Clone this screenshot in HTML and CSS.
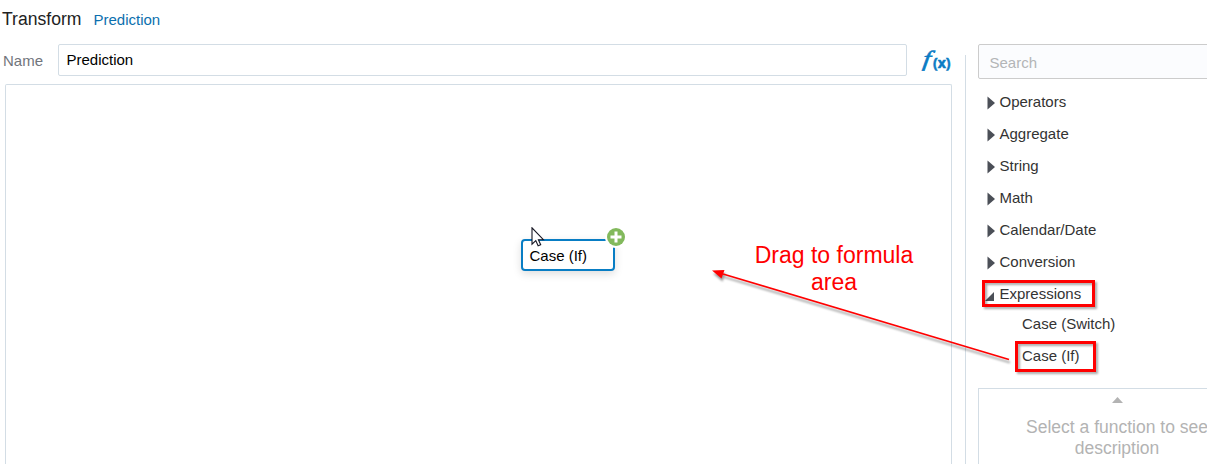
FILE: index.html
```html
<!DOCTYPE html>
<html lang="en">
<head>
<meta charset="utf-8">
<title>Transform Prediction</title>
<link rel="stylesheet" href="styles.css">
</head>
<body>
<div class="dialog">
  <header class="header"><h1 class="title">Transform</h1><span class="subtitle">Prediction</span></header>
  <div class="content">
    <main class="editor">
      <div class="name-row">
        <label class="name-label">Name</label>
        <div class="name-input">Prediction</div>
        <div class="fx"><span class="fx-f">f</span><span class="fx-x">(x)</span></div>
      </div>
      <div class="canvas"></div>
    </main>
    <aside class="sidebar">
      <div class="search">Search</div>
      <ul class="tree">
        <li class="group"><svg class="caret" viewBox="0 0 8 14"><path d="M0.5 0.5 8 7 0.5 13.5z"/></svg>Operators</li>
        <li class="group"><svg class="caret" viewBox="0 0 8 14"><path d="M0.5 0.5 8 7 0.5 13.5z"/></svg>Aggregate</li>
        <li class="group"><svg class="caret" viewBox="0 0 8 14"><path d="M0.5 0.5 8 7 0.5 13.5z"/></svg>String</li>
        <li class="group"><svg class="caret" viewBox="0 0 8 14"><path d="M0.5 0.5 8 7 0.5 13.5z"/></svg>Math</li>
        <li class="group"><svg class="caret" viewBox="0 0 8 14"><path d="M0.5 0.5 8 7 0.5 13.5z"/></svg>Calendar/Date</li>
        <li class="group"><svg class="caret" viewBox="0 0 8 14"><path d="M0.5 0.5 8 7 0.5 13.5z"/></svg>Conversion</li>
        <li class="group"><svg class="caret open" viewBox="0 0 9 9"><path d="M9 0V9H0z"/></svg>Expressions</li>
        <li class="item first">Case (Switch)</li>
        <li class="item">Case (If)</li>
      </ul>
      <div class="help">
        <svg class="up" viewBox="0 0 11 6"><path d="M0 6 5.5 0 11 6z"/></svg>
        <p class="help-text">Select a function to see<br>description</p>
      </div>
    </aside>
  </div>
  <div class="node">Case (If)</div>
  <svg class="add" viewBox="0 0 22 22"><circle cx="11" cy="11" r="11" fill="#fff"/><circle cx="11" cy="11" r="9" fill="#82b95c"/><path d="M11 5.500v11M5.500 11h11" stroke="#fff" stroke-width="3"/></svg>
  <svg class="pointer" viewBox="0 0 14 20"><path d="M1 .8V17.2L4.8 13.6 7.1 18.8 9.7 17.7 7.4 12.7H12.4z" fill="#fff" stroke="#151522" stroke-width="1.1"/></svg>
  <div class="note">Drag to formula<br>area</div>
  <svg class="arrow" viewBox="0 0 310 110"><path d="M298 99.500 12 14" stroke="#f00" stroke-width="1.8"/><path d="M1 10.500 13.500 10 10.500 18.500z" fill="#f00"/></svg>
  <div class="mark mark-group"></div>
  <div class="mark mark-item"></div>
</div>
</body>
</html>
```
FILE: styles.css
```css
* { box-sizing: border-box; }
body { margin: 0; background: #fff; font: 15px/18px "Liberation Sans", Arial, sans-serif; color: #333; }
.dialog { position: relative; width: 1207px; height: 464px; overflow: hidden; display: flex; flex-direction: column; }
.header { height: 44px; flex: none; display: flex; align-items: baseline; padding: 9px 0 0 2px; }
.title { margin: 0; font-size: 17.6px; line-height: 20px; font-weight: 400; color: #222; width: 91.5px; }
.subtitle { color: #0b6fae; }
.content { display: flex; flex: 1; min-height: 0; }
.editor { width: 965px; flex: none; display: flex; flex-direction: column; }
.name-row { display: flex; height: 32px; }
.name-label { width: 58px; padding: 8px 0 0 3px; color: #71757c; }
.name-input { width: 849px; border: 1px solid #d3dde5; border-radius: 2px; padding: 6px 7.5px; color: #000; }
.fx { display: flex; align-items: flex-start; padding-left: 15px; color: #0a7bc4; }
.fx-f { width: 11px; font: italic 22px/31px "Liberation Serif", serif; padding-left: 3px; transform: translate(-1px, -1px) skewX(-8deg) scaleX(1.25); -webkit-text-stroke: .6px #0a7bc4; }
.fx-x { font: bold 14px/18px "Open Sans", sans-serif; padding-top: 10px; -webkit-text-stroke: .5px #0a7bc4; }
.canvas { flex: 1; width: 947px; margin: 8px 0 0 5px; border: 1px solid #d3dde5; border-bottom: 0; border-radius: 2px 2px 0 0; }
.sidebar { flex: 1; min-width: 0; display: flex; flex-direction: column; padding-left: 13px; background: linear-gradient(#d3dde5, #d3dde5) 0 11px / 1px 100% no-repeat; }
.search { flex: none; width: 280px; height: 35px; border: 1px solid #ccc; border-radius: 2px; background: #fbfcfe; padding: 9px 10.5px; color: #b3b5b7; }
.tree { list-style: none; margin: 0; padding: 7px 0 0 9px; height: 309px; flex: none; }
.group { display: flex; align-items: center; height: 32px; }
.caret { width: 8px; height: 14px; margin: 2px 5px 0 -.5px; fill: #4b4f57; flex: none; }
.caret.open { width: 9px; height: 9px; margin: 4px 5.5px 0 -2px; }
.item { height: 32px; padding: 7px 0 0 35px; }
.first { height: 30px; padding-top: 5px; }
.help { flex: 1; width: 278px; border: 1px solid #d3dde5; border-bottom: 0; display: flex; flex-direction: column; align-items: center; padding-top: 8px; }
.up { width: 11px; height: 6px; fill: #b3b3b3; flex: none; }
.help-text { margin: 14px 0 0; font-size: 17.5px; line-height: 21px; text-align: center; color: #b3b3b3; white-space: nowrap; }
.node { position: absolute; left: 521px; top: 239px; width: 94px; height: 32px; border: 2px solid #087dc4; border-radius: 4px; background: #fff; padding: 6px 6.5px; color: #000; box-shadow: 0 3px 9px #0002; }
.add { position: absolute; left: 605px; top: 226px; width: 22px; height: 22px; }
.pointer { position: absolute; left: 530.5px; top: 226.5px; width: 14px; height: 20px; }
.note { position: absolute; left: 734px; top: 242px; width: 200px; text-align: center; font-size: 23px; line-height: 27px; color: #f00; }
.arrow { position: absolute; left: 711px; top: 260px; width: 310px; height: 110px; filter: drop-shadow(1px 3px 1px #0006); }
.mark { position: absolute; border: 3px solid #f00; filter: drop-shadow(2px 2px 1px #0005); }
.mark-group { left: 982px; top: 280px; width: 113px; height: 27px; }
.mark-item { left: 1015px; top: 341px; width: 81px; height: 31px; }
```
